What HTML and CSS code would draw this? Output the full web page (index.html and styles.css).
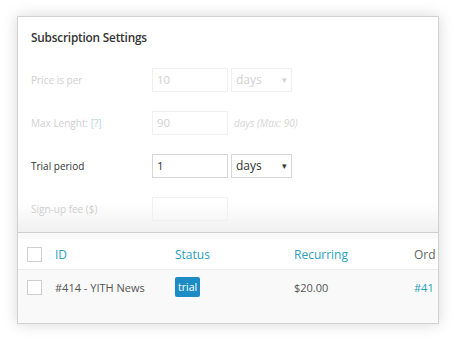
FILE: index.html
```html
<!DOCTYPE html>
<html>
<head>
<meta charset="utf-8">
<link rel="stylesheet" href="styles.css">
</head>
<body>
<div class="wrap">
  <div class="card">
    <div class="settings">
      <h2 class="title">Subscription Settings</h2>
      <div class="row faded">
        <div class="label">Price is per</div>
        <div class="input">10</div>
        <div class="select">days<span class="caret">▾</span></div>
      </div>
      <div class="row faded">
        <div class="label">Max Lenght: <span class="help">[?]</span></div>
        <div class="input">90</div>
        <div class="note">days (Max: 90)</div>
      </div>
      <div class="row">
        <div class="label">Trial period</div>
        <div class="input">1</div>
        <div class="select">days<span class="caret">▾</span></div>
      </div>
      <div class="row faded">
        <div class="label">Sign-up fee ($)</div>
        <div class="input"></div>
      </div>
    </div>
    <div class="table">
      <div class="trow head">
        <div><span class="check"></span></div>
        <div class="link">ID</div>
        <div class="link">Status</div>
        <div class="link">Recurring</div>
        <div class="plain">Ord</div>
      </div>
      <div class="trow body">
        <div><span class="check"></span></div>
        <div class="plain">#414 - YITH News</div>
        <div><span class="badge">trial</span></div>
        <div class="plain">$20.00</div>
        <div class="link">#41</div>
      </div>
    </div>
  </div>
</div>
</body>
</html>
```
FILE: styles.css
```css
html, body { margin: 0; padding: 0; background: #fff; }
body { font-family: "Open Sans", "Liberation Sans", sans-serif; width: 454px; height: 341px; overflow: hidden; }
.wrap { padding: 16px 15px 17px 17px; }
.card {
  height: 306px;
  border: 1px solid #d2d2d2;
  box-shadow: 0 0 14px rgba(0,0,0,0.16);
  background: #f9f9f9;
  display: flex;
  flex-direction: column;
  overflow: hidden;
}
.settings {
  height: 216px;
  box-sizing: border-box;
  border-bottom: 1px solid #cfcfcf;
  background: linear-gradient(to bottom, #fff 0, #fff 185px, #f0f0f0 216px);
  padding: 10px 13px 0 13px;
  overflow: hidden;
}
.title { margin: 0 0 21px; font-size: 11.8px; font-weight: 600; color: #333; line-height: 20px; letter-spacing: -0.2px; }
.row { display: flex; align-items: center; height: 24px; margin-bottom: 19px; font-size: 11px; color: #333; }
.label { width: 121px; font-size: 10px; }
.faded .label { color: #cfcfcf; }
.help { color: #b9d2e0; }
.input {
  width: 76px; height: 24px; box-sizing: border-box;
  border: 1px solid #d6d6d6; padding: 0 4px; line-height: 22px; font-size: 11.5px;
}
.faded .input { border-color: #f0f0f0; color: #d0d0d0; }
.select {
  width: 61px; height: 24px; box-sizing: border-box; margin-left: 3px;
  border: 1px solid #d6d6d6; padding: 0 4px; line-height: 21px; font-size: 12px;
  display: flex; justify-content: space-between;
}
.faded .select { border-color: #f0f0f0; color: #d0d0d0; }
.caret { font-size: 9px; }
.note { margin-left: 6px; font-style: italic; color: #d6d6d6; font-size: 10px; }
.table { margin-top: 6px; display: flex; flex-direction: column; flex: 1; }
.trow {
  display: grid;
  grid-template-columns: 28px 120px 119px 120px auto;
  padding-left: 9px;
  align-items: center;
  white-space: nowrap;
}
.head { height: 30px; background: #fff; border-bottom: 1px solid #ececec; font-size: 12px; }
.body { height: 34px; font-size: 11px; }
.check { display: block; width: 13px; height: 13px; border: 1px solid #cfcfcf; background: #fff; }
.head .check { margin-top: 1px; }
.link { color: #2aa0bd; }
.plain { color: #555; }
.head .plain { color: #666; }
.badge { display: inline-block; background: #1e8cc4; color: #fff; font-size: 10.5px; padding: 0 3px; line-height: 20px; border-radius: 2px; }
```
